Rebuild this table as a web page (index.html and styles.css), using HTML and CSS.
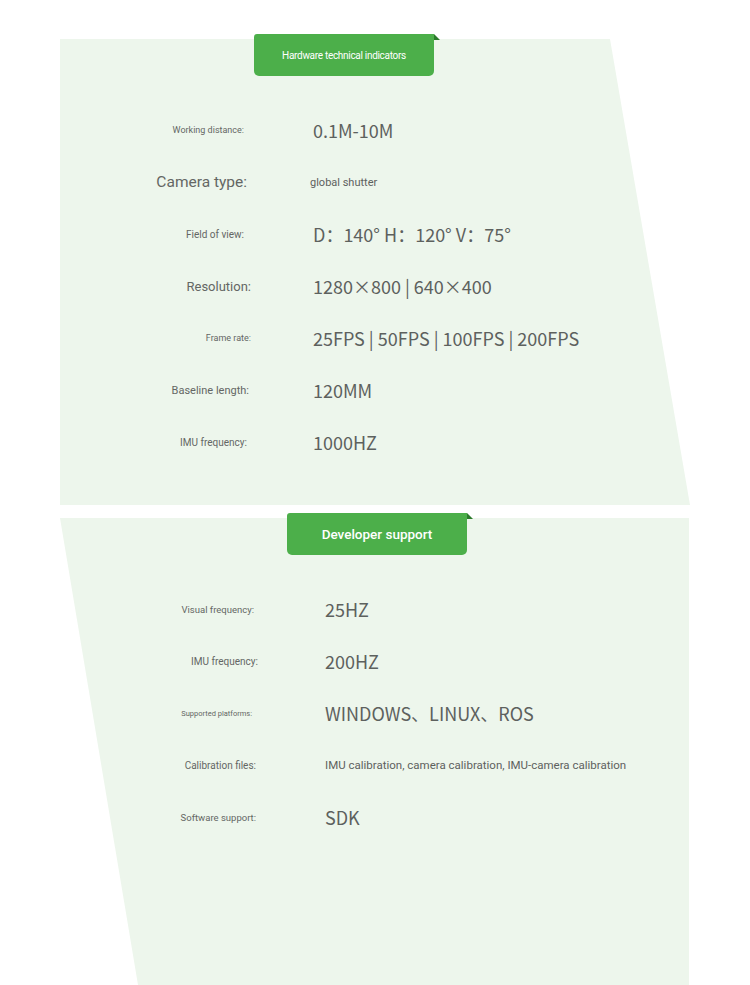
FILE: index.html
```html
<!DOCTYPE html>
<html lang="en">
<head>
<meta charset="utf-8">
<title>Specs</title>
<link rel="stylesheet" href="styles.css">
</head>
<body>
<main class="sheet">
  <section class="panel panel-hw">
    <div class="tab tab-hw"><span>Hardware technical indicators</span></div>
    <div class="rows rows-hw">
      <div class="label l-xs sh-l">Working distance:</div><div class="value">0.1M-10M</div>
      <div class="label l-lg">Camera type:</div><div class="value v-sm">global shutter</div>
      <div class="label l-fov">Field of view:</div><div class="value">D：140° H：120° V：75°</div>
      <div class="label l-md sh-r4">Resolution:</div><div class="value">1280×800 | 640×400</div>
      <div class="label l-xs sh-r4">Frame rate:</div><div class="value">25FPS | 50FPS | 100FPS | 200FPS</div>
      <div class="label l-sm sh-r2">Baseline length:</div><div class="value">120MM</div>
      <div class="label l-s2">IMU frequency:</div><div class="value">1000HZ</div>
    </div>
  </section>
  <section class="panel panel-dev">
    <div class="tab tab-dev"><span>Developer support</span></div>
    <div class="rows rows-dev">
      <div class="label l-vis">Visual frequency:</div><div class="value">25HZ</div>
      <div class="label l-s2 sh-r2">IMU frequency:</div><div class="value">200HZ</div>
      <div class="label l-xxs">Supported platforms:</div><div class="value">WINDOWS、LINUX、ROS</div>
      <div class="label l-s2">Calibration files:</div><div class="value v-xs">IMU calibration, camera calibration, IMU-camera calibration</div>
      <div class="label l-xs2">Software support:</div><div class="value">SDK</div>
    </div>
  </section>
</main>
</body>
</html>
```
FILE: styles.css
```css
html, body {
  margin: 0;
  padding: 0;
  background: #ffffff;
}
body {
  width: 750px;
  height: 985px;
  overflow: hidden;
  font-family: Roboto, "Liberation Sans", sans-serif;
}
.sheet {
  padding-top: 34px;
  display: flex;
  flex-direction: column;
  gap: 8px;
}
.panel {
  position: relative;
  isolation: isolate;
  margin-left: 60px;
}
.panel::before {
  content: "";
  position: absolute;
  left: 0;
  right: 0;
  top: 5px;
  bottom: 0;
  z-index: -1;
  background: #edf6ec;
}
.panel-hw {
  width: 630px;
  padding-bottom: 37px;
}
.panel-hw::before {
  clip-path: polygon(0 0, 550px 0, 100% 100%, 0 100%);
}
.panel-dev {
  width: 629px;
  padding-bottom: 142px;
}
.panel-dev::before {
  clip-path: polygon(0 0, 100% 0, 100% 100%, 78px 100%);
}
.tab {
  position: relative;
  width: 180px;
  height: 42px;
  background: #4caf4a;
  border-radius: 3px 0 5px 5px;
  display: flex;
  align-items: center;
  justify-content: center;
  color: #ffffff;
}
.tab::after {
  content: "";
  position: absolute;
  top: 0;
  right: -6px;
  width: 6px;
  height: 6px;
  background: #2c7a2c;
  clip-path: polygon(0 0, 100% 100%, 0 100%);
}
.tab-hw {
  margin-left: 194px;
  font-size: 10px;
  letter-spacing: -0.3px;
}
.tab-dev {
  margin-left: 227px;
  font-size: 13.5px;
  font-weight: 500;
}
.rows {
  display: grid;
  grid-auto-rows: 52px;
  align-items: center;
  margin-top: 28px;
}
.rows-hw {
  grid-template-columns: 187px 1fr;
  column-gap: 66px;
}
.rows-dev {
  grid-template-columns: 196px 1fr;
  column-gap: 69px;
}
.label {
  text-align: right;
  color: #646664;
  white-space: nowrap;
}
.l-xxs { font-size: 7.5px; margin-right: 4px; }
.l-xs { font-size: 9px; }
.l-fov { font-size: 10px; margin-right: 3px; }
.l-xs2 { font-size: 9.5px; }
.l-s2 { font-size: 10px; }
.l-vis { font-size: 9.5px; margin-right: 2px; }
.l-sm { font-size: 11px; }
.l-md { font-size: 13px; }
.l-lg { font-size: 15.5px; }
.sh-l { margin-right: 3px; }
.sh-r2 { margin-right: -2px; }
.sh-r4 { margin-right: -4px; }
.value {
  font-family: "Noto Sans CJK SC", "Noto Sans", sans-serif;
  font-size: 18px;
  color: #5d615e;
  white-space: nowrap;
}
.v-sm {
  font-family: Roboto, "Liberation Sans", sans-serif;
  font-size: 11px;
  margin-left: -3px;
}
.v-xs {
  font-family: Roboto, "Liberation Sans", sans-serif;
  font-size: 11.5px;
}
```
